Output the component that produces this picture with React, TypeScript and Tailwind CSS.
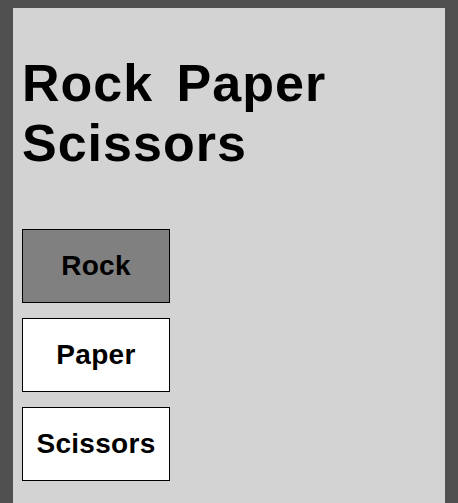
export default function App() {
  const choices = ["Rock", "Paper", "Scissors"];
  const selected = "Rock";

  return (
    <div className="min-h-[503px] bg-[#505050] pt-2" style={{ fontFamily: '"Liberation Sans", Arial, sans-serif' }}>
      <div className="mx-auto w-[432px] min-h-[495px] bg-[#d3d3d3] px-[9px] pt-[46px]">
        <h1 className="text-[52px] font-bold leading-[1.15] tracking-[1px] [word-spacing:8px] text-black">
          Rock Paper Scissors
        </h1>

        <div className="mt-[55px] flex flex-col gap-[15px]">
          {choices.map((c) => (
            <button
              key={c}
              className={
                c === selected
                  ? "w-[148px] h-[74px] flex items-center justify-center border border-black bg-[#808080] text-[28px] font-bold tracking-[0.3px] text-black"
                  : "w-[148px] h-[74px] flex items-center justify-center border border-black bg-white text-[28px] font-bold tracking-[0.3px] text-black"
              }
            >
              {c}
            </button>
          ))}
        </div>
      </div>
    </div>
  );
}
